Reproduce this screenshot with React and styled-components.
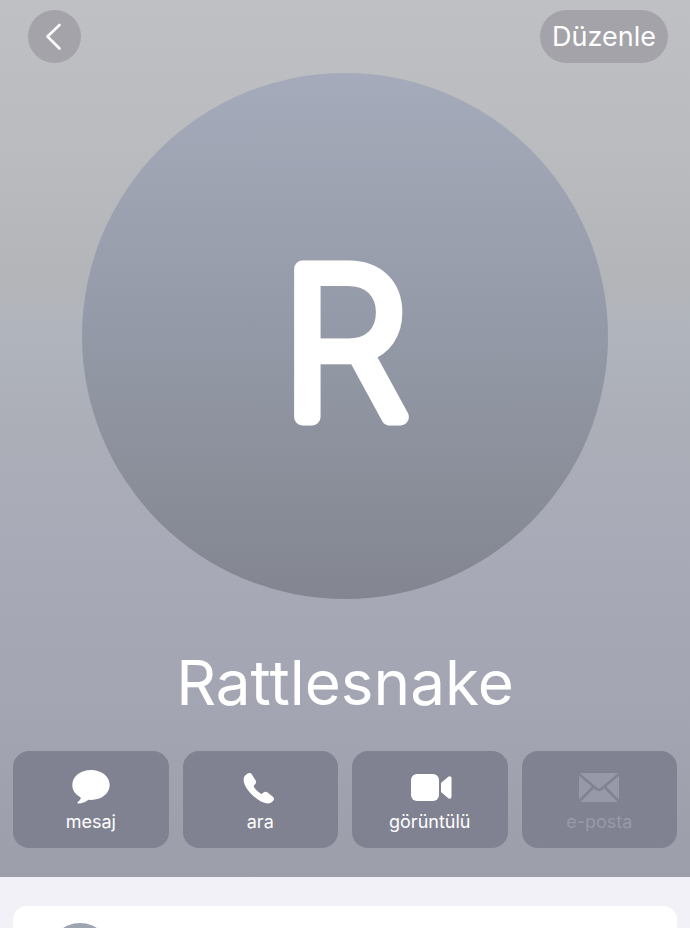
import React from 'react';
import styled, { createGlobalStyle } from 'styled-components';

const GlobalStyle = createGlobalStyle`
  * {
    box-sizing: border-box;
  }

  body {
    margin: 0;
    background: #f2f1f7;
    font-family: Inter, Roboto, sans-serif;
  }
`;

const Page = styled.main`
  display: flex;
  flex-direction: column;
  height: 100vh;
  overflow: hidden;
`;

const Hero = styled.section`
  flex: none;
  padding-bottom: 29px;
  color: #ffffff;
  background: linear-gradient(
    #bfc0c4 0%,
    #bbbcc0 15%,
    #b4b5b9 32%,
    #b0b4bc 37%,
    #abaeb7 50%,
    #a8aab7 62%,
    #a4a5b2 80%,
    #9c9eaa 100%
  );
`;

const Topbar = styled.header`
  display: flex;
  justify-content: space-between;
  padding: 10px 22px 10px 28px;
`;

const RoundButton = styled.button`
  display: flex;
  align-items: center;
  justify-content: center;
  height: 53px;
  min-width: 53px;
  padding: 0 ${({ $wide }) => ($wide ? 12 : 0)}px;
  border: 0;
  border-radius: 27px;
  background: #a3a3a9;
  color: #ffffff;
  font-family: inherit;
  font-size: 27px;
  line-height: 34px;
`;

const Avatar = styled.svg`
  display: block;
  width: calc(100% - 164px);
  margin: 0 auto;
`;

const Letter = styled.text`
  fill: #ffffff;
  stroke: #ffffff;
  stroke-width: 17px;
  stroke-linejoin: round;
  font-family: Inter, sans-serif;
  font-size: 204px;
  font-weight: 200;
  text-anchor: middle;
`;

const Name = styled.h1`
  margin: 44px 0 28px;
  font-size: 62px;
  font-weight: 400;
  line-height: 80px;
  text-align: center;
`;

const Actions = styled.nav`
  display: grid;
  grid-template-columns: repeat(4, 1fr);
  gap: 14px;
  padding: 0 13px;
`;

const Action = styled.button`
  display: flex;
  flex-direction: column;
  align-items: center;
  gap: 4px;
  padding: 16px 0 15px;
  border: 0;
  border-radius: 16px;
  background: #808292;
  color: #ffffff;
  font-family: inherit;
  font-size: 18px;
  line-height: 22px;

  &:disabled {
    color: #9899a8;
  }
`;

const Details = styled.section`
  display: flex;
  flex: 1;
  min-height: 0;
  padding: 29px 13px 0;
`;

const Card = styled.div`
  flex: 1;
  padding: 17px 36px;
  border-radius: 14px 14px 0 0;
  background: #ffffff;
  overflow: hidden;
`;

const Thumb = styled.div`
  width: 62px;
  height: 62px;
  border-radius: 50%;
  background: linear-gradient(#a0a6b2, #838690);
`;

const Icon = ({ children }) => (
  <svg width="44" height="40" viewBox="0 0 44 40" fill="currentColor" aria-hidden="true">
    {children}
  </svg>
);

const actions = [
  {
    label: 'mesaj',
    icon: (
      <path d="M22 3C11.500 3 3.300 9.600 3.300 18c0 5.100 3 9.300 7.700 11.900.8.500.9 1.200.5 2-.6 1.200-1.700 2.100-2.700 3.100-.8.800-.3 1.700.8 1.600 3.500-.2 6.800-1.900 9.200-3.400.7-.4 1.300-.4 2.200-.3h1c10.500 0 18.700-6.500 18.700-14.900S32.500 3 22 3Z" />
    ),
  },
  {
    label: 'ara',
    icon: (
      <path d="M14.500 28.200c5.200 5 10.500 8.200 15 8.200 2.500 0 4.400-1.100 5.900-3 .9-1.300.8-2.700-.5-3.700l-5.300-4.100c-1.500-1.100-2.700-1.100-4-.1l-1.400 1.100c-.6.400-1.100.4-1.700 0-2.200-1.500-4.900-4.200-6.400-6.400-.4-.6-.4-1.100 0-1.700l1.300-1.700c.9-1.200.9-2.300.1-3.600l-3.600-5.600C12.900 6 11.300 5.700 9.700 6.600 7.200 8 5.600 9.900 5.600 12.600c0 4.800 3.600 10.500 8.900 15.600Z" />
    ),
  },
  {
    label: 'görüntülü',
    icon: (
      <>
        <rect x="3" y="7" width="28" height="27" rx="6" />
        <path d="M33 16 39.700 10.200c1.800-1.500 3.800-1 3.800 1.200v18.200c0 2.200-2 2.700-3.800 1.200L33 25Z" />
      </>
    ),
  },
  {
    label: 'e-posta',
    disabled: true,
    icon: (
      <>
        <rect x="2" y="6" width="40" height="29" rx="2" />
        <path
          d="M2 7 19.300 21.800c1.900 1.600 3.500 1.600 5.400 0L42 7M2 34.500 15.800 20.500M42 34.500 28.200 20.500"
          fill="none"
          stroke="#808292"
          strokeWidth="2.500"
        />
      </>
    ),
  },
];

export default function App() {
  return (
    <>
      <GlobalStyle />
      <Page>
        <Hero>
          <Topbar>
            <RoundButton type="button" aria-label="Geri">
              <svg width="22" height="28" viewBox="0 0 22 28" fill="none" aria-hidden="true">
                <path
                  d="M15.500 2 3.500 13.500l12 12"
                  stroke="currentColor"
                  strokeWidth="2.600"
                  strokeLinecap="round"
                  strokeLinejoin="round"
                />
              </svg>
            </RoundButton>
            <RoundButton type="button" $wide>
              Düzenle
            </RoundButton>
          </Topbar>
          <Avatar viewBox="0 0 526 526">
            <defs>
              <linearGradient id="avatar" x1="0" y1="0" x2="0" y2="1">
                <stop offset="0" stopColor="#a5abba" />
                <stop offset="0.500" stopColor="#9399a6" />
                <stop offset="1" stopColor="#838690" />
              </linearGradient>
            </defs>
            <circle cx="263" cy="263" r="263" fill="url(#avatar)" />
            <Letter x="263" y="344">
              R
            </Letter>
          </Avatar>
          <Name>Rattlesnake</Name>
          <Actions>
            {actions.map(({ label, icon, disabled }) => (
              <Action key={label} type="button" disabled={disabled}>
                <Icon>{icon}</Icon>
                {label}
              </Action>
            ))}
          </Actions>
        </Hero>
        <Details>
          <Card>
            <Thumb />
          </Card>
        </Details>
      </Page>
    </>
  );
}
